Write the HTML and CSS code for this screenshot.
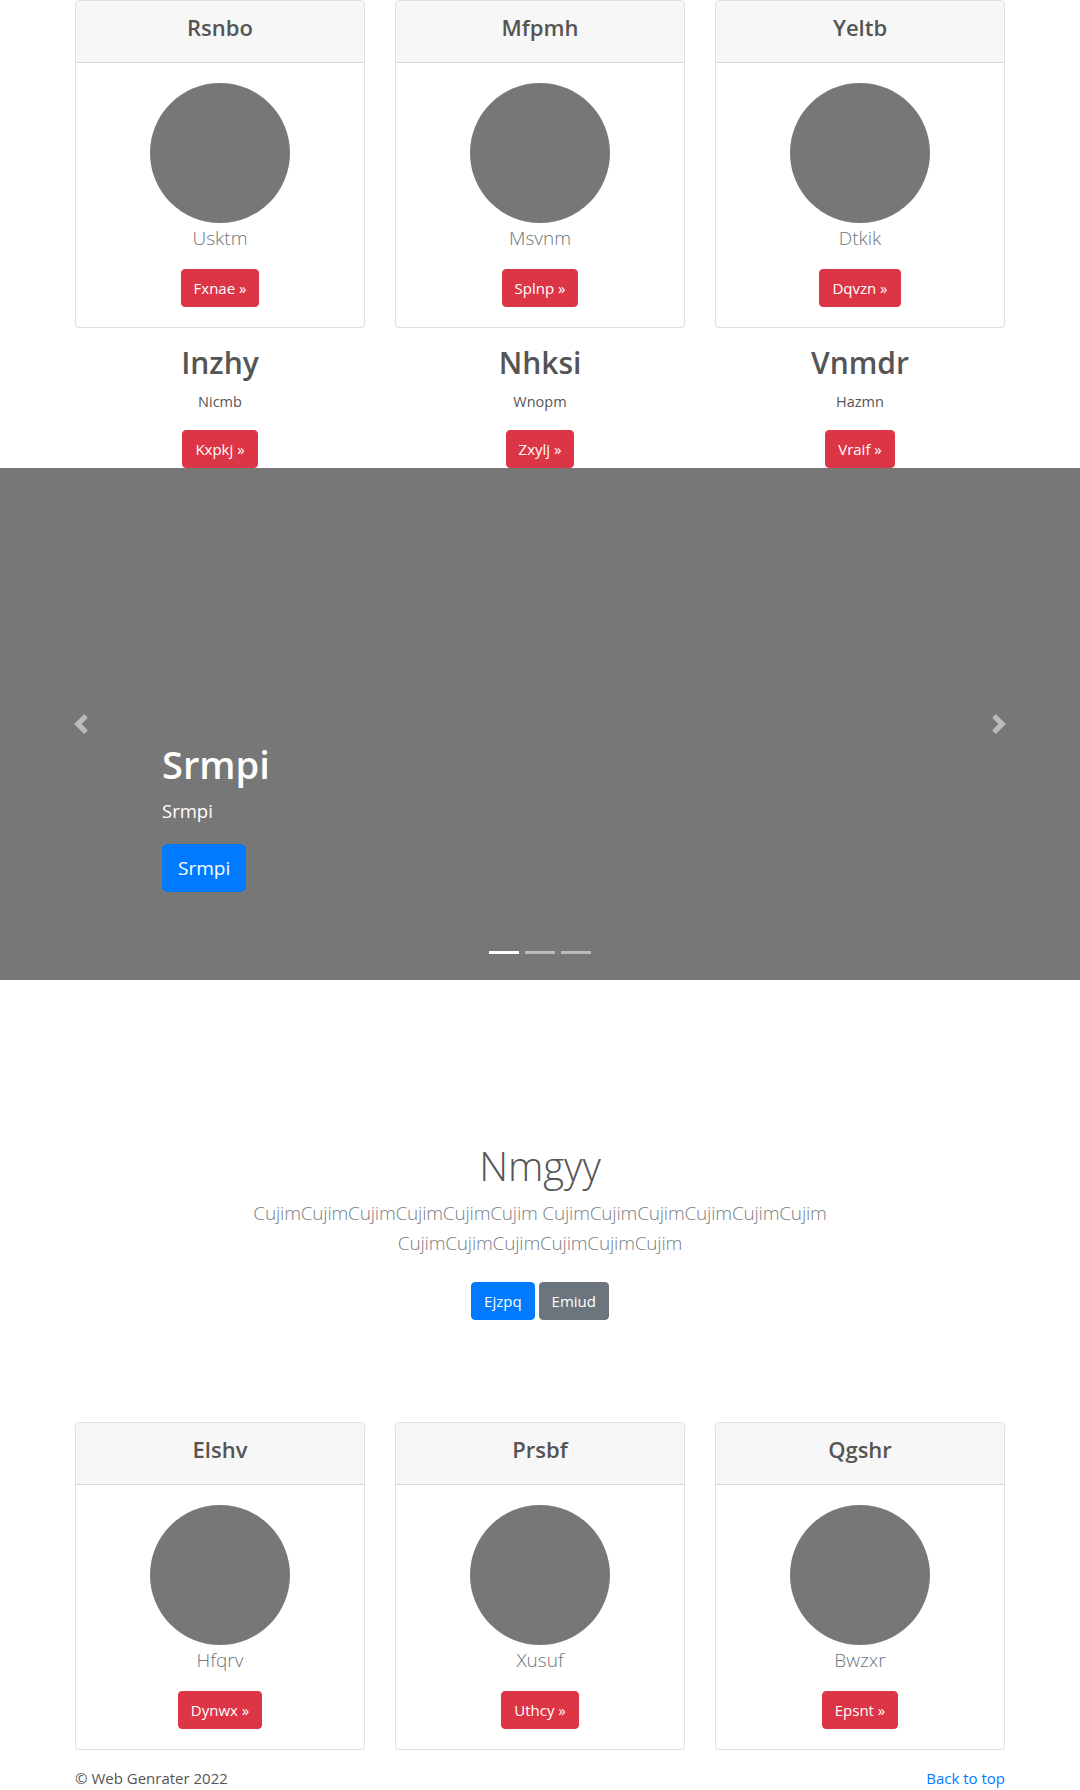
FILE: index.html
```html
<!DOCTYPE html>
<html lang="en">
<head>
<meta charset="utf-8">
<title>Web Genrater</title>
<link rel="stylesheet" href="styles.css">
</head>
<body>
<main>
  <div class="container">
    <div class="card-row">
      <div class="col">
        <div class="card">
          <div class="card-header"><h4>Rsnbo</h4></div>
          <div class="card-body">
            <div class="avatar"></div>
            <p class="lead">Usktm</p>
            <a class="btn btn-danger" href="#">Fxnae &raquo;</a>
          </div>
        </div>
      </div>
      <div class="col">
        <div class="card">
          <div class="card-header"><h4>Mfpmh</h4></div>
          <div class="card-body">
            <div class="avatar"></div>
            <p class="lead">Msvnm</p>
            <a class="btn btn-danger" href="#">Splnp &raquo;</a>
          </div>
        </div>
      </div>
      <div class="col">
        <div class="card">
          <div class="card-header"><h4>Yeltb</h4></div>
          <div class="card-body">
            <div class="avatar"></div>
            <p class="lead">Dtkik</p>
            <a class="btn btn-danger" href="#">Dqvzn &raquo;</a>
          </div>
        </div>
      </div>
    </div>

    <div class="feature-row">
      <div class="feature">
        <h2>Inzhy</h2>
        <p>Nicmb</p>
        <a class="btn btn-danger" href="#">Kxpkj &raquo;</a>
      </div>
      <div class="feature">
        <h2>Nhksi</h2>
        <p>Wnopm</p>
        <a class="btn btn-danger" href="#">Zxylj &raquo;</a>
      </div>
      <div class="feature">
        <h2>Vnmdr</h2>
        <p>Hazmn</p>
        <a class="btn btn-danger" href="#">Vraif &raquo;</a>
      </div>
    </div>
  </div>

  <section class="carousel">
    <div class="carousel-caption">
      <h1>Srmpi</h1>
      <p class="caption-text">Srmpi</p>
      <p class="caption-action"><a class="btn btn-lg btn-primary" href="#">Srmpi</a></p>
    </div>
    <a class="control control-prev" href="#" aria-label="Previous">
      <svg viewBox="0 0 8 8" width="20" height="20"><path fill="#fff" d="M5.25 0l-4 4 4 4 1.5-1.5L4.25 4l2.5-2.5L5.25 0z"/></svg>
    </a>
    <a class="control control-next" href="#" aria-label="Next">
      <svg viewBox="0 0 8 8" width="20" height="20"><path fill="#fff" d="M2.75 0l-1.5 1.5L3.75 4l-2.5 2.5L2.75 8l4-4-4-4z"/></svg>
    </a>
    <ol class="indicators">
      <li class="active"></li>
      <li></li>
      <li></li>
    </ol>
  </section>

  <section class="jumbotron">
    <div class="container">
      <h1>Nmgyy</h1>
      <p class="lead">CujimCujimCujimCujimCujimCujim CujimCujimCujimCujimCujimCujim CujimCujimCujimCujimCujimCujim</p>
      <p class="actions">
        <a class="btn btn-primary" href="#">Ejzpq</a>
        <a class="btn btn-secondary" href="#">Emiud</a>
      </p>
    </div>
  </section>

  <div class="container">
    <div class="card-row">
      <div class="col">
        <div class="card">
          <div class="card-header"><h4>Elshv</h4></div>
          <div class="card-body">
            <div class="avatar"></div>
            <p class="lead">Hfqrv</p>
            <a class="btn btn-danger" href="#">Dynwx &raquo;</a>
          </div>
        </div>
      </div>
      <div class="col">
        <div class="card">
          <div class="card-header"><h4>Prsbf</h4></div>
          <div class="card-body">
            <div class="avatar"></div>
            <p class="lead">Xusuf</p>
            <a class="btn btn-danger" href="#">Uthcy &raquo;</a>
          </div>
        </div>
      </div>
      <div class="col">
        <div class="card">
          <div class="card-header"><h4>Qgshr</h4></div>
          <div class="card-body">
            <div class="avatar"></div>
            <p class="lead">Bwzxr</p>
            <a class="btn btn-danger" href="#">Epsnt &raquo;</a>
          </div>
        </div>
      </div>
    </div>
  </div>
</main>

<footer class="footer">
  <div class="footer-inner">
    <p>&copy; Web Genrater 2022</p>
    <a href="#">Back to top</a>
  </div>
</footer>
</body>
</html>
```

FILE: styles.css
```css
* {
  box-sizing: border-box;
}

html, body {
  margin: 0;
  padding: 0;
}

body {
  font-family: "Open Sans", "Noto Sans", "Liberation Sans", sans-serif;
  font-size: 16px;
  line-height: 1.5;
  color: #555;
  background: #fff;
}

a {
  text-decoration: none;
}

h1, h2, h4, p {
  margin: 0;
}

.container {
  width: 960px;
  margin: 0 auto;
}

.card-row {
  display: grid;
  grid-template-columns: repeat(3, 320px);
}

.col {
  padding: 0 15px;
}

.card {
  border: 1px solid rgba(0, 0, 0, 0.125);
  border-radius: 4px;
  text-align: center;
  overflow: hidden;
}

.card-header {
  background: #f7f7f7;
  border-bottom: 1px solid rgba(0, 0, 0, 0.125);
  padding: 12px 20px;
}

.card-header h4 {
  font-size: 22px;
  font-weight: 600;
  line-height: 28.8px;
  margin-bottom: 8px;
  color: #555;
}

.card-body {
  padding: 20px;
  display: flex;
  flex-direction: column;
  align-items: center;
}

.avatar {
  width: 140px;
  height: 140px;
  border-radius: 50%;
  background: #777;
}

.lead {
  font-size: 19px;
  font-weight: 300;
  line-height: 30px;
  color: #6c757d;
}

.card-body .lead {
  margin-bottom: 16px;
}

.btn {
  display: inline-block;
  font-size: 15px;
  font-weight: 400;
  line-height: 24px;
  padding: 6px 12px;
  border-radius: 4px;
  color: #fff;
  border: 1px solid transparent;
}

.btn-danger {
  background: #dc3545;
  border-color: #dc3545;
}

.btn-primary {
  background: #007bff;
  border-color: #007bff;
}

.btn-secondary {
  background: #6c757d;
  border-color: #6c757d;
}

.btn-lg {
  font-size: 19px;
  padding: 8px 15px;
  line-height: 30px;
  border-radius: 5px;
}

.feature-row {
  display: grid;
  grid-template-columns: repeat(3, 320px);
  margin-top: 16px;
  text-align: center;
}

.feature h2 {
  font-size: 30px;
  font-weight: 600;
  line-height: 38.4px;
  margin-bottom: 8px;
  color: #555;
}

.feature p {
  font-size: 14.5px;
  line-height: 24px;
  margin-bottom: 16px;
}

.feature .btn {
  vertical-align: top;
}

.carousel {
  position: relative;
  height: 512px;
  background: #777;
  display: flex;
  align-items: flex-end;
  padding: 0 15% 48px;
}

.carousel-caption {
  color: #fff;
  padding-bottom: 20px;
  width: 100%;
}

.carousel-caption h1 {
  font-size: 38px;
  font-weight: 600;
  line-height: 48px;
  margin-bottom: 8px;
}

.caption-text {
  font-size: 18.5px;
  line-height: 30px;
  margin-bottom: 18px;
}

.caption-action {
  margin-bottom: 20px;
  display: flex;
}

.control {
  position: absolute;
  top: 0;
  bottom: 0;
  width: 15%;
  display: flex;
  align-items: center;
  justify-content: center;
  opacity: 0.5;
}

.control-prev {
  left: 0;
}

.control-next {
  right: 0;
}

.indicators {
  position: absolute;
  left: 0;
  right: 0;
  bottom: 26px;
  margin: 0;
  padding: 0;
  list-style: none;
  display: flex;
  justify-content: center;
  gap: 6px;
}

.indicators li {
  width: 30px;
  height: 3px;
  background: rgba(255, 255, 255, 0.5);
}

.indicators li.active {
  background: #fff;
}

.jumbotron {
  text-align: center;
  padding: 162px 0 94px;
}

.jumbotron .container {
  display: flex;
  flex-direction: column;
  align-items: center;
}

.jumbotron h1 {
  font-size: 40px;
  font-weight: 300;
  line-height: 48px;
  color: #555;
  margin-bottom: 8px;
}

.jumbotron .lead {
  max-width: 640px;
  margin-bottom: 16px;
  color: #7a7f85;
  letter-spacing: -0.2px;
}

.actions {
  display: flex;
  gap: 4px;
  justify-content: center;
  margin: 8px 0;
}

.footer {
  width: 960px;
  margin: 0 auto;
  padding: 16px 15px 0;
}

.footer-inner {
  display: flex;
  justify-content: space-between;
  align-items: center;
  font-size: 15px;
  line-height: 24px;
}

.footer-inner a {
  color: #007bff;
}
```
